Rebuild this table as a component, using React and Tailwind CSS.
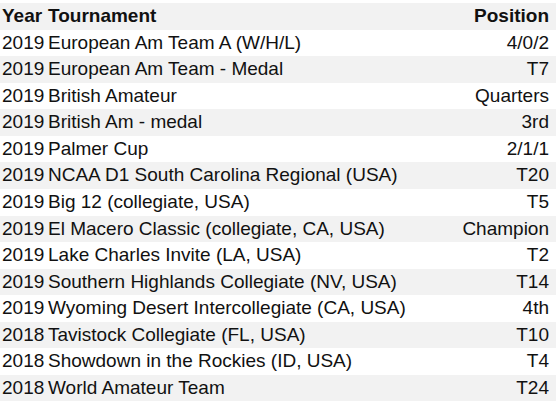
const rows = [
  ["2019", "European Am Team A (W/H/L)", "4/0/2"],
  ["2019", "European Am Team - Medal", "T7"],
  ["2019", "British Amateur", "Quarters"],
  ["2019", "British Am - medal", "3rd"],
  ["2019", "Palmer Cup", "2/1/1"],
  ["2019", "NCAA D1 South Carolina Regional (USA)", "T20"],
  ["2019", "Big 12 (collegiate, USA)", "T5"],
  ["2019", "El Macero Classic (collegiate, CA, USA)", "Champion"],
  ["2019", "Lake Charles Invite (LA, USA)", "T2"],
  ["2019", "Southern Highlands Collegiate (NV, USA)", "T14"],
  ["2019", "Wyoming Desert Intercollegiate (CA, USA)", "4th"],
  ["2018", "Tavistock Collegiate (FL, USA)", "T10"],
  ["2018", "Showdown in the Rockies (ID, USA)", "T4"],
  ["2018", "World Amateur Team", "T24"],
];

export default function App() {
  return (
    <div
      className="w-[556px] h-[405px] bg-white pt-[3px] text-[#111] text-[19px]"
      style={{ fontFamily: '"Liberation Sans", Arial, sans-serif' }}
    >
      <div className="flex h-[26.57px] items-center bg-[#f2f2f2] font-bold pl-[2px] pr-[7px]">
        <div className="w-[46px]">Year</div>
        <div className="flex-1">Tournament</div>
        <div className="text-right">Position</div>
      </div>
      {rows.map((r, i) => (
        <div
          key={i}
          className={
            "flex h-[26.57px] items-center pl-[2px] pr-[7px] " +
            (i % 2 === 1 ? "bg-[#f2f2f2]" : "bg-white")
          }
        >
          <div className="w-[46px]">{r[0]}</div>
          <div className="flex-1">{r[1]}</div>
          <div className="text-right">{r[2]}</div>
        </div>
      ))}
    </div>
  );
}
